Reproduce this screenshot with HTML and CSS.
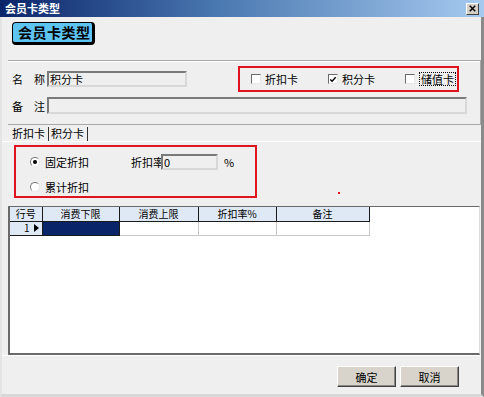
FILE: index.html
```html
<!DOCTYPE html>
<html lang="zh">
<head>
<meta charset="utf-8">
<title>会员卡类型</title>
<link rel="stylesheet" href="styles.css">
</head>
<body>
<div class="window">
  <div class="titlebar">
    <span class="title">会员卡类型</span>
    <span class="close">
      <svg width="12" height="11" viewBox="0 0 12 11"><path d="M3 2.5 L9 8.5 M9 2.5 L3 8.5" stroke="#000" stroke-width="1.6"/></svg>
    </span>
  </div>
  <div class="content">
    <div class="header">
      <div class="badge">会员卡类型</div>
    </div>

    <div class="info">
      <div class="row">
        <span class="label"><span>名</span><span>称</span></span>
        <span class="field name">积分卡</span>
        <div class="checks">
          <label class="chk"><span class="box"></span>折扣卡</label>
          <label class="chk"><span class="box checked"><svg width="9" height="9" viewBox="0 0 9 9"><path d="M1.5 4.5 L3.5 6.5 L7.5 2" fill="none" stroke="#000" stroke-width="1.6"/></svg></span>积分卡</label>
          <label class="chk"><span class="box"></span><span class="focus">储值卡</span></label>
        </div>
      </div>
      <div class="row row2">
        <span class="label"><span>备</span><span>注</span></span>
        <span class="field remark"></span>
      </div>
    </div>

    <div class="tabs">
      <span class="tab active">折扣卡</span>
      <span class="tab">积分卡</span>
    </div>

    <div class="tabpanel">
      <div class="options">
        <div class="opt">
          <span class="radio on"></span><span class="otext">固定折扣</span>
          <span class="rate-label">折扣率</span>
          <span class="field rate">0</span>
          <span class="pct">%</span>
        </div>
        <div class="opt">
          <span class="radio"></span><span class="otext">累计折扣</span>
        </div>
      </div>
      <span class="dot"></span>
    </div>

    <div class="grid">
      <table>
        <thead>
          <tr><th class="c0">行号</th><th class="c1">消费下限</th><th class="c2">消费上限</th><th class="c3">折扣率%</th><th class="c4">备注</th></tr>
        </thead>
        <tbody>
          <tr><td class="rowhead"><span class="rh"><span>1</span><svg width="5" height="8" viewBox="0 0 5 8"><path d="M0 0 L5 4 L0 8 Z" fill="#000"/></svg></span></td><td class="sel"></td><td></td><td></td><td></td></tr>
        </tbody>
      </table>
    </div>

    <div class="footer">
      <button class="btn">确定</button>
      <button class="btn">取消</button>
    </div>
  </div>
</div>
</body>
</html>
```

FILE: styles.css
```css
* { box-sizing: border-box; }
html, body { margin: 0; padding: 0; background: #efefef; }
body {
  font-family: "Noto Sans CJK SC", "Noto Sans", sans-serif;
  font-size: 11px;
  color: #000;
}
.window {
  width: 484px;
  height: 397px;
  background: #efefef;
  border-left: 2px solid #e4e4e4;
  border-right: 3px solid #8a8a8a;
  border-bottom: 3px solid #d8d8d8;
  display: flex;
  flex-direction: column;
}
.titlebar {
  height: 17px;
  background: linear-gradient(to right, #0a246a 0%, #4a78b0 45%, #a6caf0 100%);
  display: flex;
  align-items: center;
  justify-content: space-between;
  padding: 0 3px 0 3px;
  margin-left: -2px;
  margin-right: -3px;
}
.title {
  color: #fff;
  font-weight: bold;
  font-size: 11px;
  line-height: 17px;
  padding-left: 2px;
}
.close {
  width: 13px;
  height: 12px;
  background: #d4d0c8;
  border: 1px solid;
  border-color: #fff #404040 #404040 #fff;
  display: flex;
  align-items: center;
  justify-content: center;
  margin-right: 2px;
}
.content {
  flex: 1;
  display: flex;
  flex-direction: column;
}
.header {
  height: 43px;
  padding: 5px 0 0 10px;
}
.badge {
  width: 83px;
  height: 23px;
  background: #5ec4f2;
  border: 1px solid #000;
  border-right-width: 3px;
  border-bottom-width: 3px;
  border-radius: 4px;
  font-weight: bold;
  font-size: 14px;
  line-height: 18px;
  padding-left: 5px;
  letter-spacing: 0.5px;
}
.info {
  height: 65px;
  margin-left: 6px;
  border-top: 1px solid #a8a8a8;
  border-bottom: 1px solid #a8a8a8;
  border-right: 1px solid #a8a8a8;
  padding: 5px 0 0 4px;
  box-shadow: inset 0 1px 0 #fff;
}
.row {
  display: flex;
  align-items: center;
  height: 26px;
}
.row2 { margin-top: 5px; height: 17px; }
.label {
  width: 35px;
  display: flex;
  justify-content: space-between;
  padding-right: 2px;
  white-space: nowrap;
}
.field {
  display: block;
  height: 16px;
  background: #efefef;
  border: 2px solid;
  border-color: #7a7a7a #d8d8d8 #d8d8d8 #7a7a7a;
  line-height: 12px;
  padding-left: 1px;
  white-space: nowrap;
}
.name { width: 140px; }
.remark { width: 420px; height: 17px; }
.checks {
  margin-left: 51px;
  width: 221px;
  height: 26px;
  border: 2px solid #e0141e;
  display: flex;
  align-items: center;
  padding-left: 11px;
  white-space: nowrap;
}
.chk {
  display: flex;
  align-items: center;
  width: 77px;
}
.chk:last-child { width: auto; }
.box {
  width: 10px;
  height: 10px;
  border: 1px solid;
  border-color: #6a6a6a #e8e8e8 #e8e8e8 #6a6a6a;
  background: #fff;
  margin-right: 4px;
  display: flex;
  align-items: center;
  justify-content: center;
}
.box svg { display: block; }
.focus {
  border: 1px dotted #000;
  padding: 0 1px;
  line-height: 12px;
}
.tabs {
  height: 17px;
  display: flex;
  align-items: flex-end;
  padding-left: 8px;
  border-bottom: 1px solid #fff;
}
.tab {
  height: 14px;
  line-height: 13px;
  padding: 0 3px 0 2px;
  border-right: 1px solid #333;
  white-space: nowrap;
}
.tabpanel {
  height: 64px;
  position: relative;
  padding: 3px 0 0 12px;
}
.options {
  width: 243px;
  height: 53px;
  border: 2px solid #e0141e;
  padding: 7px 0 0 14px;
}
.opt {
  display: flex;
  align-items: center;
  height: 16px;
  white-space: nowrap;
}
.opt + .opt { margin-top: 9px; }
.radio {
  flex: none;
  width: 10px;
  height: 10px;
  border-radius: 50%;
  border: 1px solid;
  border-color: #7a7a7a #e8e8e8 #e8e8e8 #7a7a7a;
  background: #fff;
  margin-right: 5px;
  position: relative;
}
.radio.on::after {
  content: "";
  position: absolute;
  left: 2px; top: 2px;
  width: 4px; height: 4px;
  border-radius: 50%;
  background: #000;
}
.otext { width: 86px; flex: none; }
.rate-label { width: 30px; flex: none; }
.rate { width: 57px; height: 16px; flex: none; }
.pct { margin-left: 6px; }
.dot {
  position: absolute;
  left: 336px;
  top: 50px;
  width: 2px;
  height: 2px;
  background: #e0141e;
}
.grid {
  height: 149px;
  margin-left: 6px;
  margin-right: 1px;
  background: #fff;
  border: 1px solid;
  border-color: #6a6a6a #dcdcdc #6a6a6a #6a6a6a;
  border-bottom-width: 2px;
  border-left-width: 2px;
}
table {
  border-collapse: collapse;
  table-layout: fixed;
}
th, td {
  border: 1px solid #1a1a1a;
  height: 14px;
  padding: 0;
  font-weight: normal;
  font-size: 10px;
  line-height: 12px;
  text-align: center;
  white-space: nowrap;
  overflow: hidden;
}
td { border-color: #c8c8c8; }
th { background: #dfe9f5; border-color: #1a1a1a; border-top: none; }
th.c0 { border-left: none; }
.c0 { width: 32px; }
.c1 { width: 77px; }
.c2 { width: 79px; }
.c3 { width: 78px; }
.c4 { width: 93px; }
td.rowhead {
  background: #dfe9f5;
  border-color: #1a1a1a;
  border-left: none;
}
.rh {
  display: flex;
  align-items: center;
  justify-content: flex-end;
  gap: 4px;
  padding-right: 3px;
  height: 13px;
}
.rh svg { display: block; }
td.sel { background: #0a246a; border-color: #1a1a1a; }
.footer {
  flex: 1;
  display: flex;
  justify-content: flex-end;
  align-items: flex-start;
  padding: 10px 22px 0 0;
  gap: 4px;
  border-top: 1px solid #fff;
}
.btn {
  width: 59px;
  height: 21px;
  background: #d8d4cc;
  border: 1px solid;
  border-color: #fff #404040 #404040 #fff;
  box-shadow: inset -1px -1px 0 #888;
  font-family: "Noto Sans CJK SC", sans-serif;
  font-size: 11px;
  padding: 0;
}
```
